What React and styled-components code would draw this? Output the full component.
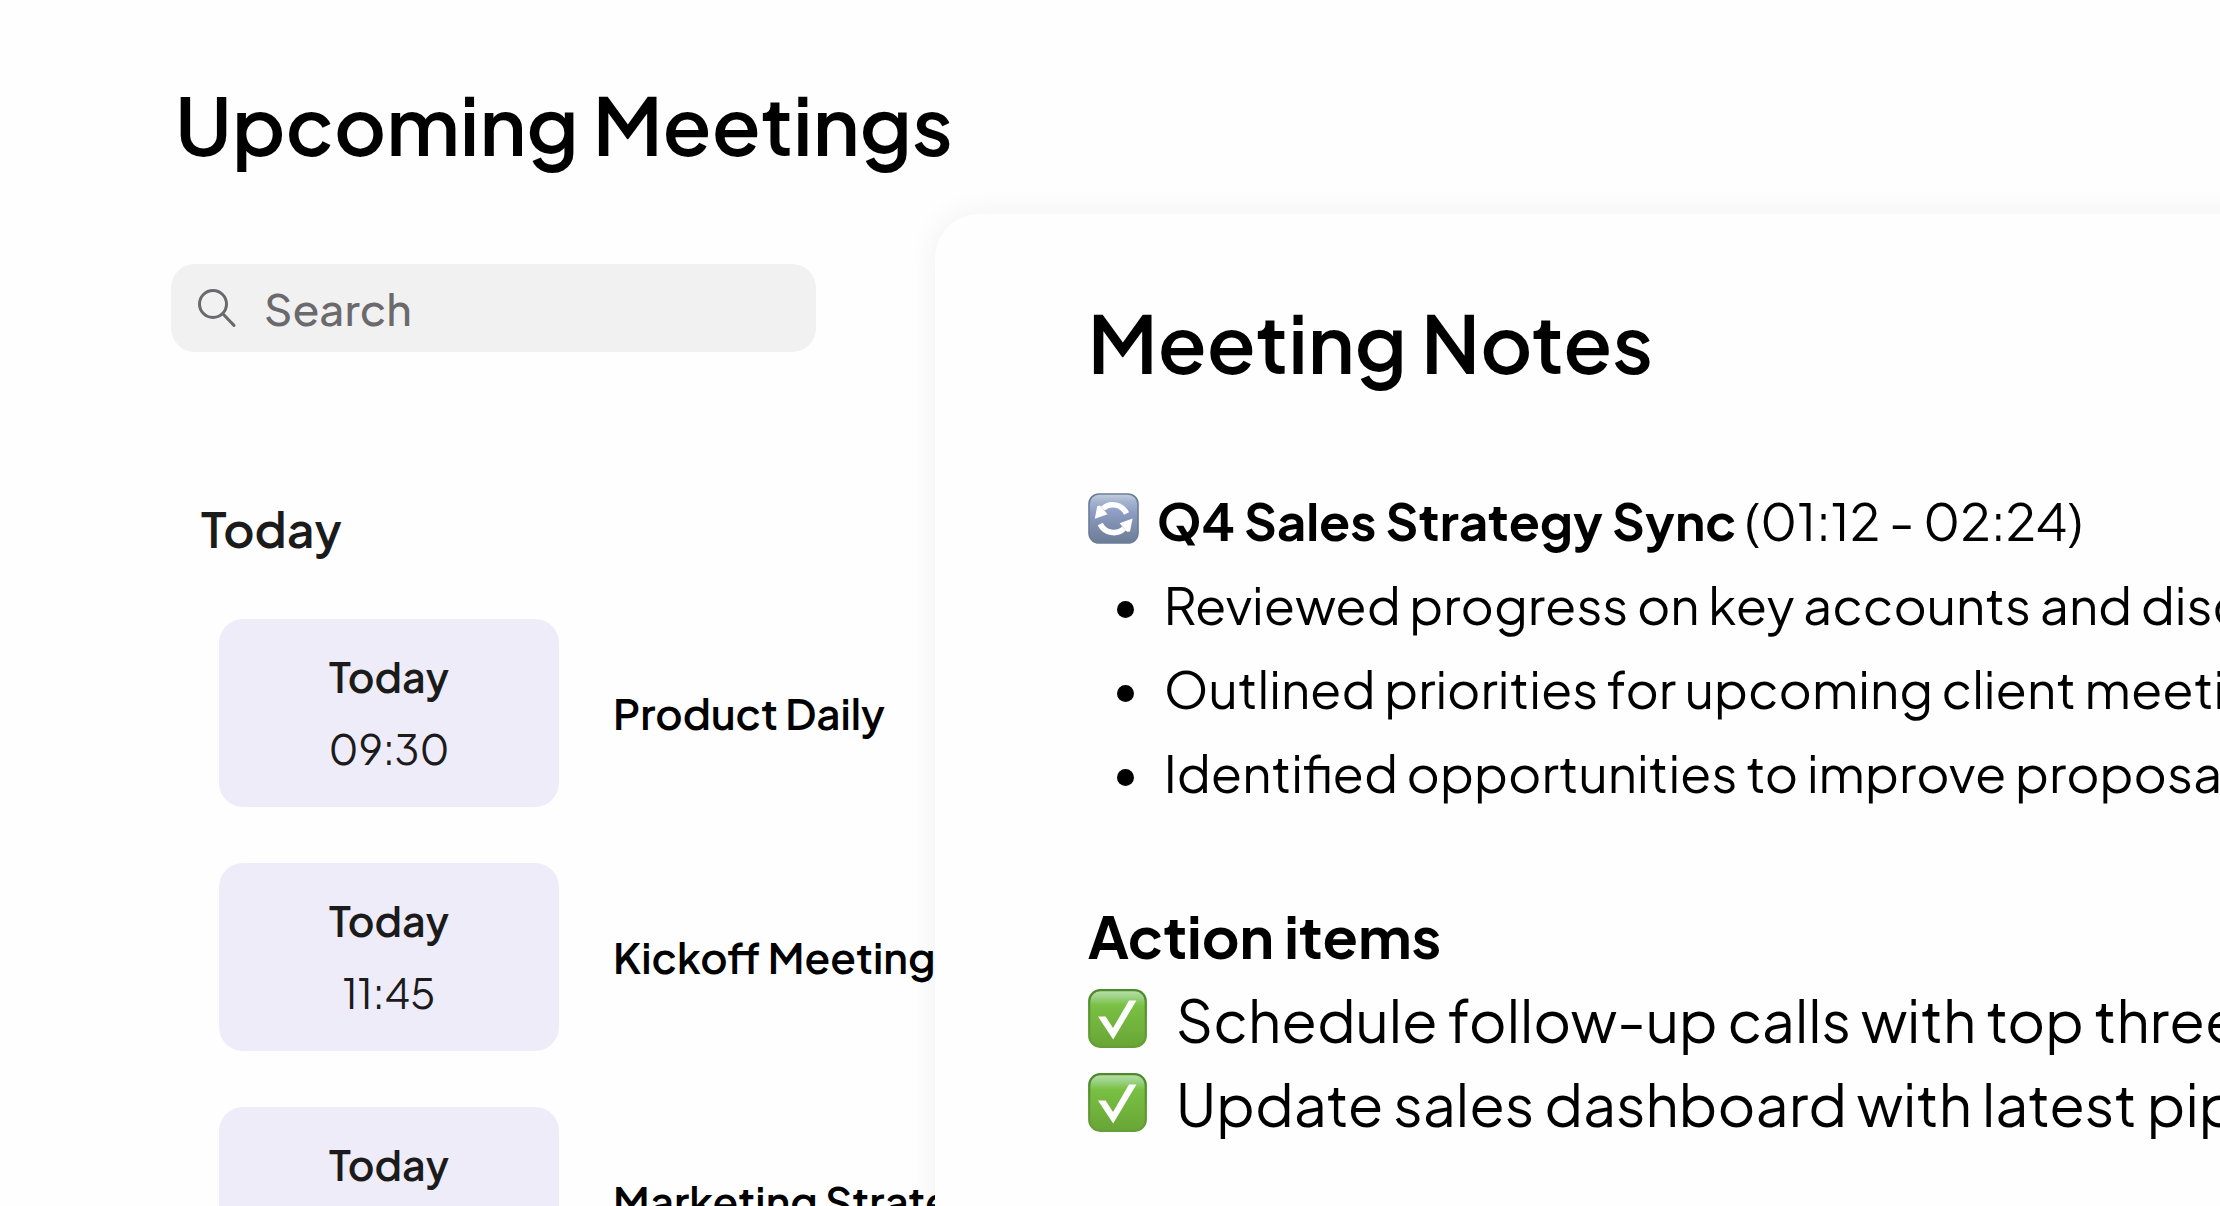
import React from "react";
import styled, { createGlobalStyle } from "styled-components";

const GlobalStyle = createGlobalStyle`
  *, *::before, *::after { box-sizing: border-box; }
  body {
    margin: 0;
    background: #fefefe;
    color: #000;
    font-family: "Plus Jakarta Sans", Inter, "Liberation Sans", sans-serif;
  }
  h1, h2, h3, ul { margin: 0; padding: 0; }
  ul { list-style: none; }
`;

const Page = styled.div`
  display: flex;
  flex-direction: column;
  height: 100vh;
  overflow: hidden;
  white-space: nowrap;
`;

const Header = styled.header`
  padding: 76px 175px 42px;
`;

const Title = styled.h1`
  font-size: 80px;
  line-height: 96px;
  font-weight: 600;
`;

const Body = styled.main`
  flex: 1;
  min-height: 0;
  display: grid;
  grid-template-columns: minmax(0, 8fr) minmax(0, 11fr);
`;

const Sidebar = styled.section`
  padding: 50px 119px 0 171px;
`;

const SearchBox = styled.label`
  display: flex;
  align-items: center;
  gap: 27px;
  height: 88px;
  padding: 0 26px;
  border-radius: 24px;
  background: #f1f1f1;
  color: #6a6a6c;
`;

const SearchInput = styled.input`
  flex: 1;
  min-width: 0;
  padding: 0;
  border: 0;
  outline: 0;
  background: transparent;
  font: inherit;
  font-size: 44px;
  line-height: 64px;
  font-weight: 500;
  color: inherit;
  &::placeholder { color: #6a6a6c; opacity: 1; }
`;

const DayHeading = styled.h2`
  margin: 145px 0 58px 30px;
  font-size: 48px;
  line-height: 64px;
  font-weight: 600;
  color: #1b1b1b;
`;

const MeetingList = styled.ul`
  display: grid;
  gap: 56px;
  padding-left: 48px;
`;

const Meeting = styled.li`
  display: flex;
  align-items: center;
  gap: 54px;
`;

const Slot = styled.time`
  flex: none;
  display: flex;
  flex-direction: column;
  justify-content: center;
  align-items: center;
  width: 340px;
  height: 188px;
  padding-bottom: 2px;
  border-radius: 24px;
  background: #efecf9;
  color: #1b1b1b;
  font-size: 41px;
  line-height: 72px;
`;

const SlotDay = styled.span`
  font-weight: 600;
`;

const SlotHour = styled.span`
  font-weight: 400;
`;

const MeetingName = styled.span`
  font-size: 42px;
  line-height: 72px;
  font-weight: 600;
`;

const Panel = styled.article`
  position: relative;
  margin-right: -64px;
  padding: 80px 0 0 153px;
  overflow: hidden;
  border-top-left-radius: 44px;
  background: #fefefe;
  box-shadow: 0 0 32px rgba(0, 0, 0, 0.06);
`;

const PanelTitle = styled.h2`
  margin-bottom: 88px;
  font-size: 80px;
  line-height: 96px;
  font-weight: 600;
`;

const TopicHeading = styled.h3`
  display: flex;
  align-items: center;
  font-size: 51px;
  line-height: 84px;
  font-weight: 400;
  white-space: pre;
`;

const TopicName = styled.strong`
  font-weight: 700;
`;

const Points = styled.ul`
  margin-bottom: 80px;
  padding-left: 29px;
`;

const Point = styled.li`
  display: flex;
  align-items: center;
  gap: 30px;
  font-size: 51px;
  line-height: 84px;
  &::before {
    content: "";
    flex: none;
    width: 17px;
    height: 17px;
    margin-top: 11px;
    border-radius: 50%;
    background: #000;
  }
`;

const ActionHeading = styled.h3`
  font-size: 58px;
  line-height: 84px;
  font-weight: 700;
`;

const Action = styled.li`
  display: flex;
  align-items: center;
  font-size: 58px;
  line-height: 84px;
`;

const Emoji = styled.svg`
  flex: none;
  width: ${(p) => p.$size}px;
  height: ${(p) => p.$size}px;
  margin: 0 ${(p) => p.$gap}px 3px 0;
`;

function SearchIcon() {
  return (
    <svg width="40" height="40" viewBox="0 0 40 40" fill="none" stroke="currentColor" strokeWidth="3" strokeLinecap="round" aria-hidden="true">
      <circle cx="16" cy="16" r="13.5" />
      <path d="M25.8 25.8 37 37.4" />
    </svg>
  );
}

function SyncEmoji() {
  return (
    <Emoji $size={51} $gap={18} viewBox="0 0 51 51" aria-hidden="true">
      <defs>
        <linearGradient id="sync" x1="0" y1="0" x2="0" y2="1">
          <stop offset="0" stopColor="#c3cfdc" />
          <stop offset="0.16" stopColor="#a3b3cf" />
          <stop offset="0.38" stopColor="#8c9cc4" />
          <stop offset="0.7" stopColor="#7c8ba9" />
          <stop offset="1" stopColor="#6d7c95" />
        </linearGradient>
      </defs>
      <rect x="1" y="1" width="49" height="49" rx="10" fill="url(#sync)" stroke="#6b7c99" strokeWidth="1.6" />
      <path d="M38.5 20.5A15 15 0 0 0 15 15.5" fill="none" stroke="#fff" strokeWidth="5.6" />
      <path d="M12 12.5 19.6 21.2 6.8 25.8 9.2 13.2Z" fill="#fff" />
      <path d="M12.2 31A15 15 0 0 0 36 35.5" fill="none" stroke="#fff" strokeWidth="5.6" />
      <path d="M39 38.8 31.6 30.2 44.6 25.6 42 38.4Z" fill="#fff" />
    </Emoji>
  );
}

function CheckEmoji() {
  return (
    <Emoji $size={59} $gap={29} viewBox="0 0 59 59" aria-hidden="true">
      <defs>
        <linearGradient id="check" x1="0" y1="0" x2="0" y2="1">
          <stop offset="0.03" stopColor="#b2dea1" />
          <stop offset="0.12" stopColor="#9dd286" />
          <stop offset="0.27" stopColor="#79c043" />
          <stop offset="1" stopColor="#69a536" />
        </linearGradient>
        <linearGradient id="check-edge" x1="0" y1="0" x2="0" y2="1">
          <stop offset="0" stopColor="#4d8a2d" />
          <stop offset="1" stopColor="#659f37" />
        </linearGradient>
      </defs>
      <rect x="1.2" y="1.2" width="56.6" height="56.6" rx="11" fill="url(#check)" stroke="url(#check-edge)" strokeWidth="2.2" />
      <path d="M10 27.4H17.6L25 39 41 11.6H48.4L25.2 50.4Z" fill="#fff" />
    </Emoji>
  );
}

const meetings = [
  { time: "09:30", name: "Product Daily" },
  { time: "11:45", name: "Kickoff Meeting" },
  { time: "14:00", name: "Marketing Strategy" },
];

const points = [
  "Reviewed progress on key accounts and discussed",
  "Outlined priorities for upcoming client meetings",
  "Identified opportunities to improve proposals",
];

const actions = [
  "Schedule follow-up calls with top three",
  "Update sales dashboard with latest pipeline",
];

export default function App() {
  return (
    <>
      <GlobalStyle />
      <Page>
        <Header>
          <Title>Upcoming Meetings</Title>
        </Header>
        <Body>
          <Sidebar>
            <SearchBox>
              <SearchIcon />
              <SearchInput type="text" placeholder="Search" aria-label="Search" />
            </SearchBox>
            <DayHeading>Today</DayHeading>
            <MeetingList>
              {meetings.map((m) => (
                <Meeting key={m.time}>
                  <Slot>
                    <SlotDay>Today</SlotDay>
                    <SlotHour>{m.time}</SlotHour>
                  </Slot>
                  <MeetingName>{m.name}</MeetingName>
                </Meeting>
              ))}
            </MeetingList>
          </Sidebar>
          <Panel>
            <PanelTitle>Meeting Notes</PanelTitle>
            <TopicHeading>
              <SyncEmoji />
              <TopicName>Q4 Sales Strategy Sync</TopicName>
              <span> (01:12 - 02:24)</span>
            </TopicHeading>
            <Points>
              {points.map((p) => (
                <Point key={p}>{p}</Point>
              ))}
            </Points>
            <ActionHeading>Action items</ActionHeading>
            <ul>
              {actions.map((a) => (
                <Action key={a}>
                  <CheckEmoji />
                  {a}
                </Action>
              ))}
            </ul>
          </Panel>
        </Body>
      </Page>
    </>
  );
}
